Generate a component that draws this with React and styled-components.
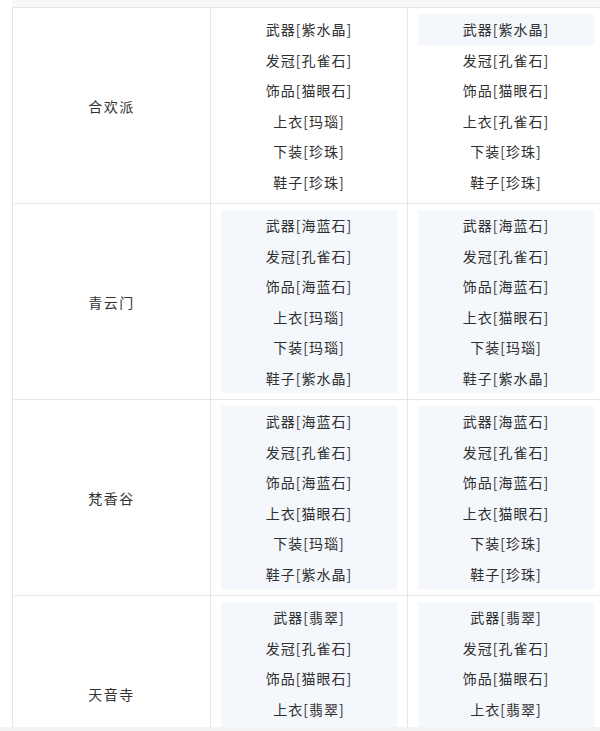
import React from "react";
import styled, { createGlobalStyle } from "styled-components";

const GlobalStyle = createGlobalStyle`
  html, body {
    margin: 0;
    padding: 0;
    background: #fff;
    overflow: hidden;
  }
  body {
    font-family: "Noto Sans CJK SC", "Noto Sans", sans-serif;
  }
`;

const rows = [
  {
    name: "合欢派",
    left: {
      items: ["武器[紫水晶]", "发冠[孔雀石]", "饰品[猫眼石]", "上衣[玛瑙]", "下装[珍珠]", "鞋子[珍珠]"],
      marked: [],
    },
    right: {
      items: ["武器[紫水晶]", "发冠[孔雀石]", "饰品[猫眼石]", "上衣[孔雀石]", "下装[珍珠]", "鞋子[珍珠]"],
      marked: [0],
    },
  },
  {
    name: "青云门",
    left: {
      items: ["武器[海蓝石]", "发冠[孔雀石]", "饰品[海蓝石]", "上衣[玛瑙]", "下装[玛瑙]", "鞋子[紫水晶]"],
      marked: [0, 1, 2, 3, 4, 5],
    },
    right: {
      items: ["武器[海蓝石]", "发冠[孔雀石]", "饰品[海蓝石]", "上衣[猫眼石]", "下装[玛瑙]", "鞋子[紫水晶]"],
      marked: [0, 1, 2, 3, 4, 5],
    },
  },
  {
    name: "梵香谷",
    left: {
      items: ["武器[海蓝石]", "发冠[孔雀石]", "饰品[海蓝石]", "上衣[猫眼石]", "下装[玛瑙]", "鞋子[紫水晶]"],
      marked: [0, 1, 2, 3, 4, 5],
    },
    right: {
      items: ["武器[海蓝石]", "发冠[孔雀石]", "饰品[海蓝石]", "上衣[猫眼石]", "下装[珍珠]", "鞋子[珍珠]"],
      marked: [0, 1, 2, 3, 4, 5],
    },
  },
  {
    name: "天音寺",
    left: {
      items: ["武器[翡翠]", "发冠[孔雀石]", "饰品[猫眼石]", "上衣[翡翠]"],
      marked: [0, 1, 2, 3],
    },
    right: {
      items: ["武器[翡翠]", "发冠[孔雀石]", "饰品[猫眼石]", "上衣[翡翠]"],
      marked: [0, 1, 2, 3],
    },
  },
];

const Viewport = styled.div`
  height: 727px;
  overflow: hidden;
  padding-left: 12px;
`;

const BottomBar = styled.div`
  height: 4px;
  background: #f3f3f4;
`;

const HeadStrip = styled.div`
  width: 593px;
  height: 7px;
  background: #f8f8f9;
`;

const Table = styled.div`
  display: grid;
  grid-template-columns: 198px 197px 197px;
  width: 593px;
  border-top: 1px solid #e4e6ea;
  border-left: 1px solid #e4e6ea;
  box-sizing: content-box;
`;

const Cell = styled.div`
  box-sizing: border-box;
  border-right: 1px solid #e4e6ea;
  border-bottom: 1px solid #e4e6ea;
  height: 196px;
`;

const NameCell = styled(Cell)`
  display: flex;
  align-items: center;
  justify-content: center;
  font-size: 14px;
  color: #333;
  letter-spacing: 1.5px;
`;

const ListCell = styled(Cell)`
  padding: 6px 10px;
  display: flex;
  flex-direction: column;
`;

const Item = styled.div`
  height: 30.5px;
  flex: none;
  display: flex;
  align-items: center;
  justify-content: center;
  font-size: 14px;
  color: #2f2f2f;
  letter-spacing: 1px;
  background: ${(p) => (p.marked ? "#f4f7fc" : "transparent")};
`;

const Filler = styled.div`
  flex: 1;
  background: ${(p) => (p.marked ? "#f4f7fc" : "transparent")};
`;

const GearList = ({ data }) => (
  <ListCell>
    {data.items.map((txt, i) => (
      <Item key={i} marked={data.marked.includes(i)}>
        {txt}
      </Item>
    ))}
    {data.items.length < 6 && <Filler marked={data.marked.length > 0} />}
  </ListCell>
);

export default function App() {
  return (
    <>
      <GlobalStyle />
      <Viewport>
        <HeadStrip />
        <Table>
          {rows.map((r) => (
            <React.Fragment key={r.name}>
              <NameCell>{r.name}</NameCell>
              <GearList data={r.left} />
              <GearList data={r.right} />
            </React.Fragment>
          ))}
        </Table>
      </Viewport>
      <BottomBar />
    </>
  );
}
